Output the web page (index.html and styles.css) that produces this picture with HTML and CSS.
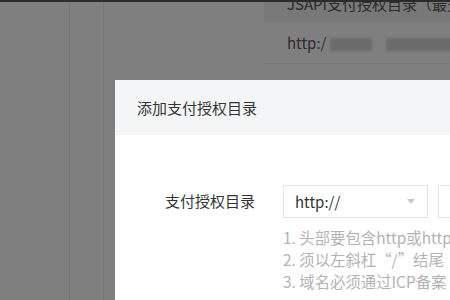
FILE: index.html
```html
<!DOCTYPE html>
<html lang="zh-CN">
<head>
<meta charset="utf-8">
<title>添加支付授权目录</title>
<link rel="stylesheet" href="styles.css">
</head>
<body>
<div class="topbar"></div>
<div class="page">
  <div class="nav nav-a"></div>
  <div class="nav nav-b"></div>
  <main class="main">
    <div class="table">
      <div class="row head">JSAPI支付授权目录（最多可添加5个）</div>
      <div class="row">http:/<span class="redact r1"></span><span class="redact r2"></span></div>
      <div class="row low">https://pay.weixin.qq.com/</div>
    </div>
  </main>
</div>
<div class="mask"></div>
<div class="modal">
  <div class="modal-head">添加支付授权目录</div>
  <div class="modal-body">
    <div class="form-row">
      <div class="label">支付授权目录</div>
      <div class="field">
        <div class="inputs">
          <div class="select">
            <span>http://</span>
            <span class="caret"></span>
          </div>
          <div class="input"></div>
        </div>
        <ul class="hints">
          <li>1. 头部要包含http或https</li>
          <li>2. 须以左斜杠“/”结尾</li>
          <li>3. 域名必须通过ICP备案</li>
        </ul>
      </div>
    </div>
  </div>
</div>
</body>
</html>
```

FILE: styles.css
```css
* { box-sizing: border-box; }
html, body {
  margin: 0;
  padding: 0;
  width: 450px;
  height: 300px;
  overflow: hidden;
  background: #ffffff;
  font-family: "Noto Sans CJK SC", "Noto Sans", sans-serif;
}
.topbar {
  height: 2px;
  background: #565656;
}
.page {
  display: flex;
  height: 298px;
}
.nav {
  flex: none;
  height: 100%;
}
.nav-a {
  width: 70px;
  border-right: 1px solid #ececec;
}
.nav-b {
  width: 34px;
  border-right: 1px solid #ececec;
}
.main {
  flex: 1;
  padding-left: 160px;
  overflow: hidden;
}
.table {
  margin-top: -14px;
  white-space: nowrap;
}
.row {
  height: 42px;
  line-height: 42px;
  padding-left: 23px;
  font-size: 15px;
  color: #5a5a5a;
  border-bottom: 1px solid #f2f2f2;
}
.row.low {
  line-height: 50px;
}
.row.head {
  height: 34px;
  line-height: 32px;
  background: #f0f0f0;
  color: #555;
}
.redact {
  display: inline-block;
  vertical-align: middle;
  height: 13px;
  background: #d6d6d6;
  filter: blur(1.5px);
}
.r1 { width: 42px; margin-left: 4px; }
.r2 { width: 70px; margin-left: 14px; }
.mask {
  position: fixed;
  inset: 0;
  background: rgba(0, 0, 0, 0.5);
}
.modal {
  position: absolute;
  left: 115px;
  top: 80px;
  width: 560px;
  height: 400px;
  background: #ffffff;
}
.modal-head {
  height: 55px;
  line-height: 55px;
  padding-left: 22px;
  background: #f4f5f7;
  color: #353535;
  font-size: 15px;
}
.modal-body {
  padding-top: 50px;
}
.form-row {
  display: flex;
  align-items: flex-start;
}
.label {
  width: 140px;
  text-align: right;
  line-height: 32px;
  font-size: 15px;
  color: #333;
}
.field {
  margin-left: 28px;
}
.inputs {
  display: flex;
  gap: 10px;
}
.select, .input {
  height: 33px;
  border: 1px solid #e3e3e3;
  background: #fff;
}
.select {
  width: 145px;
  display: flex;
  align-items: center;
  justify-content: space-between;
  padding: 0 12px 0 11px;
  font-size: 15px;
  color: #333;
}
.caret {
  width: 0;
  height: 0;
  border-left: 4px solid transparent;
  border-right: 4px solid transparent;
  border-top: 5px solid #c8c8c8;
}
.input {
  width: 120px;
}
.hints {
  list-style: none;
  margin: 8px 0 0;
  padding: 0;
  white-space: nowrap;
}
.hints li {
  line-height: 22px;
  font-size: 15.4px;
  color: #b3b3b3;
}
```
